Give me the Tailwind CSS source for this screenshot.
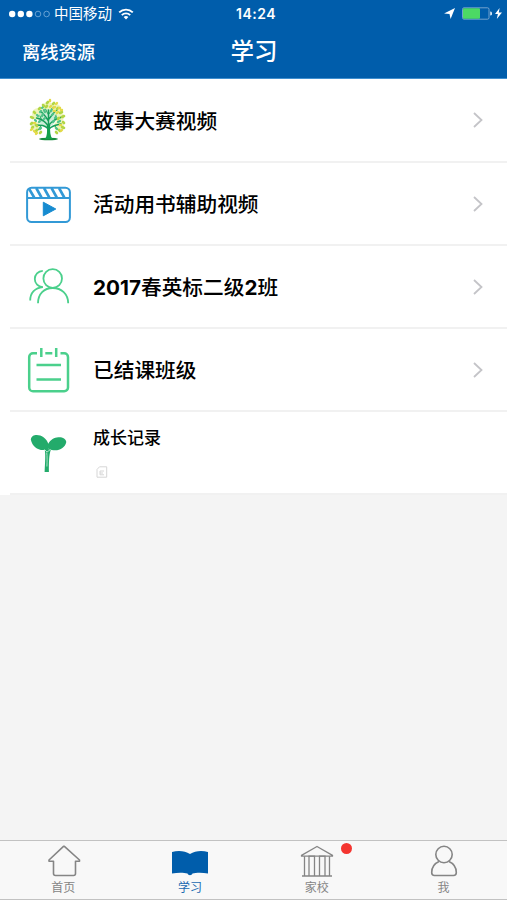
<!DOCTYPE html>
<html lang="zh-CN">
<head>
    <meta charset="UTF-8">
    <meta name="viewport" content="width=device-width, initial-scale=1.0">
    <title>学习</title>
    <script src="https://cdn.jsdelivr.net/npm/@tailwindcss/browser@4"></script>
</head>
<body class="bg-[#f4f4f4] h-screen overflow-hidden flex flex-col text-black font-['Inter','Noto_Sans_CJK_SC',sans-serif]">

    <!-- Header -->
    <header class="h-[79px] shrink-0 bg-[#005dab] border-b border-[#3f8fd0] text-white">
        <div class="h-[27px] grid grid-cols-[1fr_auto_1fr] items-center pl-[9px] pr-[5px]">
            <div class="flex items-center">
                <svg class="w-[42px] h-[10px]" viewBox="0 0 42 10" fill="#fff">
                    <circle cx="3.2" cy="5" r="3.2"/>
                    <circle cx="11.8" cy="5" r="3.2"/>
                    <circle cx="20.4" cy="5" r="3.2"/>
                    <circle cx="29" cy="5" r="2.8" fill="none" stroke="#8fbce2" stroke-width=".7"/>
                    <circle cx="37.6" cy="5" r="2.8" fill="none" stroke="#8fbce2" stroke-width=".7"/>
                </svg>
                <span class="ml-[3px] pt-[2px] text-[14.5px] leading-none">中国移动</span>
                <svg class="ml-[6px] w-4 h-3" viewBox="0 0 16 12" fill="none" stroke="#fff" stroke-width="1.9">
                    <path d="M1.2 4.4a9.7 9.7 0 0 1 13.6 0"/>
                    <path d="M3.8 7.1a6 6 0 0 1 8.4 0"/>
                    <path d="M8 11.6 5.6 9.1a3.5 3.5 0 0 1 4.8 0z" fill="#fff" stroke="none"/>
                </svg>
            </div>
            <span class="pl-px text-[14px] leading-none font-semibold tracking-[0.5px]">14:24</span>
            <div class="flex items-center justify-end">
                <svg class="w-[11px] h-[11px]" viewBox="0 0 10 10" fill="#fff">
                    <path d="M10 0 6 10 5 5.4 0 5z"/>
                </svg>
                <svg class="ml-[7px] w-[30px] h-[13px]" viewBox="0 0 30 13">
                    <rect x=".5" y=".8" width="26.5" height="11.4" rx="1.5" fill="none" stroke="#8fb4d6" stroke-width=".8"/>
                    <rect x="1" y="1.3" width="17" height="10.4" rx="1" fill="#4cd964"/>
                    <path d="M28.2 4.5a2 2 0 0 1 0 4z" fill="#dbe9f5"/>
                </svg>
                <svg class="ml-[3px] w-[7px] h-[11px]" viewBox="0 0 7 11" fill="#fff">
                    <path d="M4.6 0 0 6h2.9L1.8 11 7 4.6H3.8z"/>
                </svg>
            </div>
        </div>
        <div class="h-[50px] grid grid-cols-[1fr_auto_1fr] items-center pl-[22px]">
            <span class="pt-px text-[18.3px] leading-none font-medium">离线资源</span>
            <h1 class="text-[23.5px] leading-none font-medium pr-[21px]">学习</h1>
        </div>
    </header>

    <!-- List -->
    <main class="bg-white shrink-0 text-[20.7px] font-medium">
        <a class="h-[84px] ml-[10px] pl-[14px] pr-6 border-b-2 border-[#f1f1f1] flex items-center">
            <svg class="w-[50px] h-[50px]" viewBox="0 0 50 50" fill="none" stroke-linecap="round">
                <g fill="#e8f0a0" fill-opacity=".7">
                    <circle cx="24" cy="13" r="6"/>
                    <circle cx="32" cy="14" r="5"/>
                    <circle cx="14" cy="19" r="6"/>
                    <circle cx="35" cy="22" r="5"/>
                    <circle cx="12" cy="32" r="5"/>
                    <circle cx="35" cy="31" r="5"/>
                </g>
                <circle cx="23" cy="23" r="9" fill="#b5e6c8" fill-opacity=".7"/>
                <ellipse cx="24.5" cy="44" rx="9.5" ry="1.3" fill="#168b3c"/>
                <path d="M21 44c2.300-3 2.300-8 1.800-14h3.400c-.4 6 0 11 2.300 14z" fill="#12a04a"/>
                <g stroke="#159e5a" stroke-width="1.5">
                    <path d="M24.5 33V15M24.5 34c-4-4-7-4-13-4M24.5 31c-5-6-7-7-12-8M25 34c4-4 8-4 12-5M25 30c4-5 7-6 13-8M24.5 26c-3-5-5-7-7-9M25 24c3-4 5-7 8-9"/>
                    <path d="M18 26l-2-5M17 31l-3 4M31 31l3 4M31 25l1-5M24.5 20l-3-6M25 19l4-7" stroke-width=".9"/>
                </g>
                <g stroke="#4fc389" stroke-width="2.300">
                    <path d="M16 17l1-1M14 21l-1-1M18 21l1-2M12 26l-1-1M16 26l-1 1M21 17l-1-2M20 24l1-1M28 20l1-1M31 23l1-1M34 27l2-1M29 27l1-1M17 33l-1 1M32 33l1 1M27 16l1-2M18 13l1-1"/>
                </g>
                <g stroke="#b3d645" stroke-width="2.600">
                    <path d="M23 8l1-1M19 10l1 1M15 14l1-1M11 18l-1-1M9 23l-2-1M8 28l-1 1M9 32l-1 1M13 35l-1 1M17 37l-1 1M33 14l1-1M36 18l2-1M38 22l2-1M39 27l1 1M38 32l2 1M35 35l1 1M32 37l1 1M29 9l1-1M35 23l-1 1M12 30l1 1M22 12l1-1"/>
                </g>
                <g stroke="#e4da48" stroke-width="2.400">
                    <path d="M26 6l0-1M32 9l1-1M35 13l1 0M29 13l2-1M26 12l1-1M33 18l1-1M30 16l1 0M7 35l1-1M10 36l1 1M12 39l1-1M37 15l1 0M36 30l1 0M10 28l1 0M37 36l1-1"/>
                </g>
            </svg>
            <span class="ml-[19px] pt-[3px] flex-1">故事大赛视频</span>
            <svg class="w-[10px] h-4" viewBox="0 0 10 16" fill="none" stroke="#c4c4c8" stroke-width="1.8"><path d="M1 1l7.5 7L1 15"/></svg>
        </a>

        <a class="h-[83px] ml-[10px] pl-[14px] pr-6 border-b-2 border-[#f1f1f1] flex items-center">
            <svg class="w-[50px] h-[50px]" viewBox="0 0 50 50" fill="none" stroke="#3299d6" stroke-width="2">
                <rect x="3.1" y="8.7" width="42.8" height="34.4" rx="4.5"/>
                <path d="M3.1 18.9h42.8"/>
                <path d="M5.2 10 10.2 18.500M12.200 9l5.300 9.500M20 9l5.300 9.500M27.500 9l5.300 9.500M35 9l5.300 9.500" stroke-width="2.600"/>
                <path d="M19.300 23.200v13.600L31.800 30z" fill="#168bd0" stroke="#168bd0" stroke-width="1" stroke-linejoin="round"/>
            </svg>
            <span class="ml-[19px] pt-[3px] flex-1">活动用书辅助视频</span>
            <svg class="w-[10px] h-4" viewBox="0 0 10 16" fill="none" stroke="#c4c4c8" stroke-width="1.8"><path d="M1 1l7.5 7L1 15"/></svg>
        </a>

        <a class="h-[83px] ml-[10px] pl-[14px] pr-6 border-b-2 border-[#f1f1f1] flex items-center">
            <svg class="w-[50px] h-[50px]" viewBox="0 0 50 50" fill="none" stroke="#4bd08c" stroke-width="1.8">
                <circle cx="28.7" cy="16.5" r="9.3"/>
                <path d="M14 41.300C14 32 20 26 28.700 26s15.500 6 15.500 15.300"/>
                <path d="M18.800 8.900c-4.800.2-8 3.800-8 8.100 0 4.600 3.400 7.800 8 8.100"/>
                <path d="M18.800 25.100C11 25.700 6.200 31 6.200 38.500"/>
            </svg>
            <span class="ml-[19px] pt-[3px] flex-1"><b class="font-bold">2017</b>春英标二级<b class="font-bold">2</b>班</span>
            <svg class="w-[10px] h-4" viewBox="0 0 10 16" fill="none" stroke="#c4c4c8" stroke-width="1.8"><path d="M1 1l7.5 7L1 15"/></svg>
        </a>

        <a class="h-[83px] ml-[10px] pl-[14px] pr-6 border-b-2 border-[#f1f1f1] flex items-center">
            <svg class="w-[50px] h-[50px]" viewBox="0 0 50 50" fill="none" stroke="#4bd08c" stroke-width="2.500">
                <path d="M13 8.300H9A3.800 3.800 0 0 0 5.200 12v30.500A3.800 3.800 0 0 0 9 46.300h31.200a3.800 3.800 0 0 0 3.800-3.800V12a3.800 3.800 0 0 0-3.800-3.700H36.500M21.300 8.300h7"/>
                <path d="M17.300 3v9M32.200 3v9M12.500 20H37M12.500 34.500H37"/>
            </svg>
            <span class="ml-[19px] pt-[3px] flex-1">已结课班级</span>
            <svg class="w-[10px] h-4" viewBox="0 0 10 16" fill="none" stroke="#c4c4c8" stroke-width="1.8"><path d="M1 1l7.5 7L1 15"/></svg>
        </a>

        <a class="h-[83px] ml-[10px] pl-[14px] pr-6 border-b-2 border-[#f1f1f1] flex items-center">
            <svg class="w-[50px] h-[50px]" viewBox="0 0 50 50" fill="#23ab6b">
                <path d="M24.500 20.800C17 24.500 8.500 20 6.800 11.500 7.500 6 15 6 19.500 9.200c2.500 1.800 4 4 4.800 6.600 2.200-4.300 6-6.300 10-6.600 4.300-.3 7.600 1.700 8 4.800C41 21 32.500 24.500 24.500 20.800z"/>
                <path d="M20.500 20.500c1.300 5.500.6 13 .1 23.500h4.300c0-9.500 0-17 2-22.500l-3-.5z"/>
                <path d="M20.500 21.500l2.500 2.500 3.500-2.500M22.700 24.500c.6 4 .4 9 .2 14" fill="none" stroke="#b9e8d0" stroke-width=".9"/>
            </svg>
            <div class="ml-[19px] self-stretch pt-[13px]">
                <div class="text-[17px] leading-[26px]">成长记录</div>
                <svg class="mt-[15px] ml-[3px] w-3 h-3" viewBox="0 0 12 12" fill="none" stroke="#d6d6d6" stroke-width="1">
                    <path d="M3.500 .8h7.200v10.400H1V3.500z"/>
                    <path d="M8 5H4v3.800h4M4 7h3"/>
                </svg>
            </div>
        </a>
    </main>

    <!-- Tab bar -->
    <nav class="mt-auto h-[60px] shrink-0 bg-[#f8f8f8] border-y border-[#c2c2c2] grid grid-cols-4 text-[12px] text-[#858585]">
        <a class="flex flex-col items-center pt-[3px]">
            <svg class="w-9 h-9 ml-px" viewBox="0 0 36 36" fill="none" stroke="#858585" stroke-width="1.600" stroke-linejoin="round">
                <path d="M18.400 2.300 33.500 16v1.300h-4V29.500a2 2 0 0 1-2 2h-18a2 2 0 0 1-2-2V17.300H3V16L17.500 2.300z"/>
            </svg>
            <span class="pt-[2px] leading-3">首页</span>
        </a>
        <a class="flex flex-col items-center pt-[3px] text-[#1a69b1]">
            <svg class="w-9 h-9" viewBox="0 0 36 36" fill="#005dab">
                <path d="M0 8C6 6.200 13 6.700 18 10c5-3.300 12-3.800 18-2V29.500c-5.500-1-12-.9-15.500 0-.5 1.300-1.300 1.700-2.500 1.700s-2-.4-2.500-1.700C12 28.600 5.500 28.500 0 29.500z"/>
            </svg>
            <span class="pt-[2px] leading-3">学习</span>
        </a>
        <a class="relative flex flex-col items-center pt-[3px]">
            <svg class="w-9 h-9" viewBox="0 0 36 36" fill="none" stroke="#858585" stroke-width="1.300">
                <path d="M2.500 12.200v-.8L18 2.500l15.500 8.900v.8z" stroke-linejoin="round"/>
                <path d="M5.500 12.200v19.500M30.500 12.200v19.500M3 32h30M10 31.700V12.200h5.500v19.500M20.500 31.700V12.200H26v19.500"/>
            </svg>
            <span class="pt-[2px] leading-3">家校</span>
            <span class="absolute left-[87px] top-[1.5px] w-[11px] h-[11px] rounded-full bg-[#f43530]"></span>
        </a>
        <a class="flex flex-col items-center pt-[3px]">
            <svg class="w-9 h-9" viewBox="0 0 36 36" fill="none" stroke="#858585" stroke-width="1.600">
                <circle cx="18" cy="10.500" r="8.200"/>
                <path d="M13 17.500C8.500 19.500 5.700 23.500 5.700 28.500c0 2 1 3 2.800 3h19c1.800 0 2.800-1 2.800-3 0-5-2.800-9-7.300-11"/>
            </svg>
            <span class="pt-[2px] leading-3">我</span>
        </a>
    </nav>
</body>
</html>
